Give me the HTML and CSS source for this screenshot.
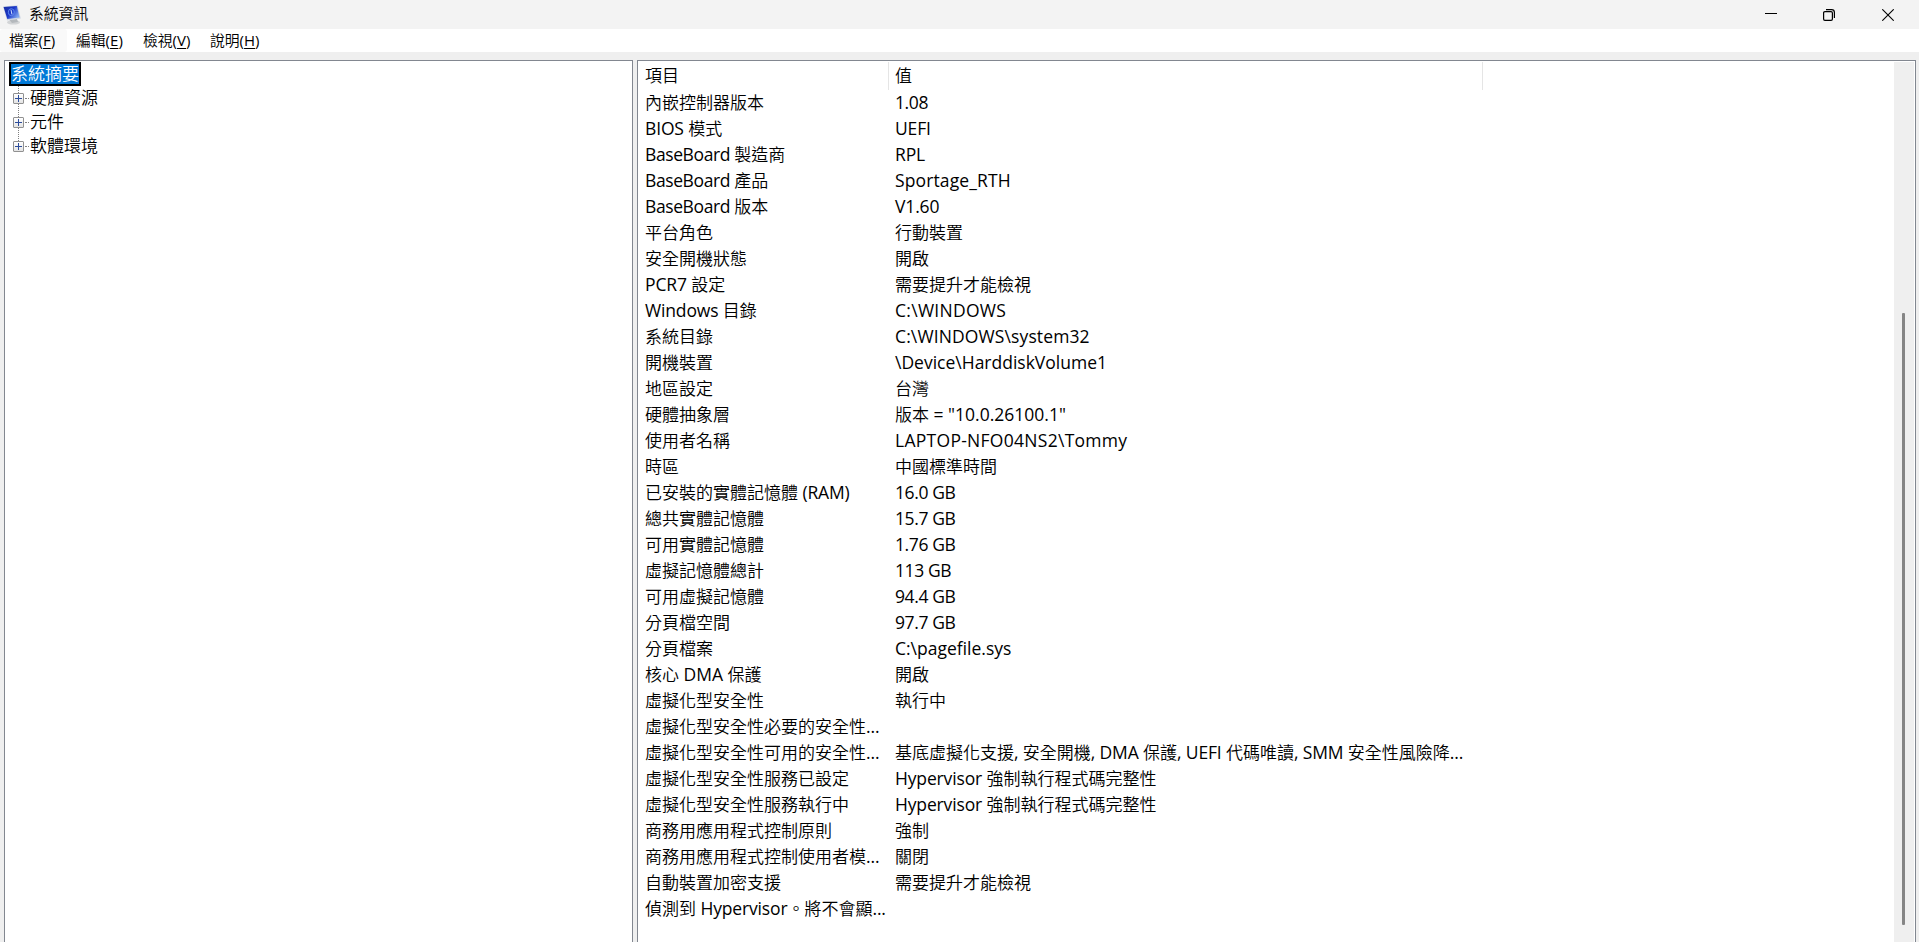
FILE: index.html
```html
<!DOCTYPE html>
<html lang="zh-Hant">
<head>
<meta charset="utf-8">
<title>系統資訊</title>
<link rel="stylesheet" href="styles.css">
</head>
<body>
<div class="window">
<header class="titlebar">
<svg class="app-icon" width="18" height="20" viewBox="0 0 18 20"><defs><linearGradient id="scr" x1="0" y1="0" x2="1" y2=".6"><stop offset="0" stop-color="#1a2fa0"/><stop offset=".55" stop-color="#1a36c8"/><stop offset="1" stop-color="#7ea4ee"/></linearGradient></defs><ellipse cx="10.500" cy="17.300" rx="6.500" ry="2.300" fill="#d2d4d6"/><path d="M6 14.500l8-.5 1 3-6 1z" fill="#b4b8bc"/><path d="M0 1.500L14.500.3 17.800 13.400 4 15.600z" fill="#cdd5e2"/><path d="M.6 2L13.800.9l2.800 11.500L4.300 14z" fill="url(#scr)"/><ellipse cx="8.300" cy="7.200" rx="3" ry="3.500" fill="none" stroke="#5c86ee"/><path d="M8 4.800l.9 4.500" stroke="#cfe0ff"/></svg>
<h1 class="title">系統資訊</h1>
<div class="controls">
<svg width="12" height="12" viewBox="0 0 12 12"><path d="M0 5.500h12" stroke="#000"/></svg>
<svg width="12" height="12" viewBox="0 0 12 12" fill="none" stroke="#000" stroke-width="1.200"><rect x=".6" y="2.600" width="8.800" height="8.800" rx="1.300"/><path d="M3 .6h5.600a2.800 2.800 0 0 1 2.800 2.800V9"/></svg>
<svg width="12" height="12" viewBox="0 0 12 12"><path d="M.3.3l11.400 11.400M11.700.3L.3 11.700" stroke="#000" stroke-width="1.100"/></svg>
</div>
</header>
<nav class="menubar">
<a class="menu active">檔案<b>(<u>F</u>)</b></a><a class="menu">編輯<b>(<u>E</u>)</b></a><a class="menu">檢視<b>(<u>V</u>)</b></a><a class="menu">說明<b>(<u>H</u>)</b></a>
</nav>
<main class="content">
<section class="tree">
<div class="root">系統摘要</div>
<div class="node"><i class="plus"></i><span>硬體資源</span></div>
<div class="node"><i class="plus"></i><span>元件</span></div>
<div class="node"><i class="plus"></i><span>軟體環境</span></div>
</section>
<section class="list">
<div class="rows">
<div class="row head"><div>項目</div><div>值</div></div>
<div class="row"><div>內嵌控制器版本</div><div><b class="tight">1.08</b></div></div>
<div class="row"><div><b>BIOS </b>模式</div><div><b>UEFI</b></div></div>
<div class="row"><div><b class="tight">BaseBoard </b>製造商</div><div><b>RPL</b></div></div>
<div class="row"><div><b class="tight">BaseBoard </b>產品</div><div><b class="wide">Sportage_RTH</b></div></div>
<div class="row"><div><b class="tight">BaseBoard </b>版本</div><div><b>V1.60</b></div></div>
<div class="row"><div>平台角色</div><div>行動裝置</div></div>
<div class="row"><div>安全開機狀態</div><div>開啟</div></div>
<div class="row"><div><b>PCR7 </b>設定</div><div>需要提升才能檢視</div></div>
<div class="row"><div><b>Windows </b>目錄</div><div><b class="wider">C:\WINDOWS</b></div></div>
<div class="row"><div>系統目錄</div><div><b class="wide">C:\WINDOWS\system32</b></div></div>
<div class="row"><div>開機裝置</div><div><b class="plain">\Device\HarddiskVolume1</b></div></div>
<div class="row"><div>地區設定</div><div>台灣</div></div>
<div class="row"><div>硬體抽象層</div><div>版本<b class="plain"> = "10.0.26100.1"</b></div></div>
<div class="row"><div>使用者名稱</div><div><b class="wider">LAPTOP-NFO04NS2\Tommy</b></div></div>
<div class="row"><div>時區</div><div>中國標準時間</div></div>
<div class="row"><div>已安裝的實體記憶體<b> (RAM)</b></div><div><b class="tight">16.0 GB</b></div></div>
<div class="row"><div>總共實體記憶體</div><div><b class="tight">15.7 GB</b></div></div>
<div class="row"><div>可用實體記憶體</div><div><b class="tight">1.76 GB</b></div></div>
<div class="row"><div>虛擬記憶體總計</div><div><b class="tight">113 GB</b></div></div>
<div class="row"><div>可用虛擬記憶體</div><div><b class="tight">94.4 GB</b></div></div>
<div class="row"><div>分頁檔空間</div><div><b class="tight">97.7 GB</b></div></div>
<div class="row"><div>分頁檔案</div><div><b class="plain">C:\pagefile.sys</b></div></div>
<div class="row"><div>核心<b class="plain"> DMA </b>保護</div><div>開啟</div></div>
<div class="row"><div>虛擬化型安全性</div><div>執行中</div></div>
<div class="row"><div>虛擬化型安全性必要的安全性<b>...</b></div><div></div></div>
<div class="row"><div>虛擬化型安全性可用的安全性<b>...</b></div><div>基底虛擬化支援<b>, </b>安全開機<b>, DMA </b>保護<b>, UEFI </b>代碼唯讀<b>, SMM </b>安全性風險降<b>...</b></div></div>
<div class="row"><div>虛擬化型安全性服務已設定</div><div><b>Hypervisor </b>強制執行程式碼完整性</div></div>
<div class="row"><div>虛擬化型安全性服務執行中</div><div><b>Hypervisor </b>強制執行程式碼完整性</div></div>
<div class="row"><div>商務用應用程式控制原則</div><div>強制</div></div>
<div class="row"><div>商務用應用程式控制使用者模<b>...</b></div><div>關閉</div></div>
<div class="row"><div>自動裝置加密支援</div><div>需要提升才能檢視</div></div>
<div class="row"><div>偵測到<b> Hypervisor</b>。將不會顯<b>...</b></div><div></div></div>
</div>
<div class="scrollbar"><div class="thumb"></div></div>
</section>
</main>
</div>
</body>
</html>
```
FILE: styles.css
```css
* { box-sizing: border-box; }
body { margin: 0; color: #000; font: 350 17px/24px "Noto Sans CJK TC", sans-serif; }
.window { display: flex; flex-direction: column; height: 942px; overflow: hidden; background: #efefef; }
.titlebar { display: flex; align-items: center; flex: none; height: 29px; padding-left: 3px; background: #f3f3f3; }
.title { margin: 0 0 0 8px; padding-bottom: 3px; font: 350 14.8px/26px "Noto Sans CJK TC", sans-serif; }
.controls { display: flex; gap: 47px; margin-left: auto; padding-right: 25px; }
.controls svg { display: block; }
.controls svg:first-child { margin: -1px -1px 0 0; }
.menubar { display: flex; flex: none; height: 23px; background: #fff; font: 350 14.8px/22px "Noto Sans CJK TC", sans-serif; }
.menu { width: 67px; padding-left: 9px; white-space: nowrap; }
.menu b { font-family: "Open Sans", sans-serif; font-weight: 400; font-size: 15px; line-height: 1; }
.active { background: #f9f9f9; border-radius: 3px; }
.menu u { text-underline-offset: 2px; text-decoration-thickness: 1px; }
.content { display: flex; flex: 1; min-height: 0; gap: 4px; padding: 8px 3px 0 4px; }
.tree, .list { border: 1px solid #828790; border-bottom: 0; background: #fff; }
.tree { width: 629px; padding: 1px 0 0 4px; }
.root { width: 72px; height: 24px; border: 2px solid #000; background: #0078d7; color: #fff; line-height: 18px; white-space: nowrap; }
.node { display: flex; align-items: center; height: 24px; padding-left: 4px; line-height: 22px; background: repeating-linear-gradient(#808080 0 1px, transparent 1px 2px) 9px 0 / 1px 100% no-repeat; }
.node span { padding-bottom: 2px; }
.node:last-child { background-size: 1px 12px; }
.plus { position: relative; width: 11px; height: 11px; margin-right: 6px; border: 1px solid #919191; border-radius: 1px; background: linear-gradient(#2d4d9b, #2d4d9b) 1px 4px / 7px 1px no-repeat, linear-gradient(#2d4d9b, #2d4d9b) 4px 1px / 1px 7px no-repeat, linear-gradient(#fff, #e4e4e4); }
.plus::after { content: ""; position: absolute; left: 11px; top: 4px; width: 4px; border-top: 1px dotted #808080; }
.list { display: flex; flex: 1; }
.rows { flex: 1; padding-top: 1px; }
.row { display: grid; grid-template-columns: 251px 594px; height: 26px; }
.row > div { padding-left: 7px; white-space: nowrap; }
.row > div + div { padding-left: 6px; }
.head { height: 28px; line-height: 25px; }
.head > div { border-right: 1px solid #e5e5e5; }
.row b { font-family: "Open Sans", sans-serif; font-weight: 400; font-size: 17.5px; line-height: 1; letter-spacing: -0.15px; white-space: pre; }
.row .tight { letter-spacing: -0.4px; }
.row .plain { letter-spacing: 0; }
.row .wide { letter-spacing: 0.12px; }
.row .wider { letter-spacing: 0.28px; }
.scrollbar { width: 20px; margin: 1px 1px 0 0; padding: 251px 0 0 8px; background: #efefef; }
.thumb { width: 3px; height: 612px; border-radius: 1px; background: #858585; }
```
